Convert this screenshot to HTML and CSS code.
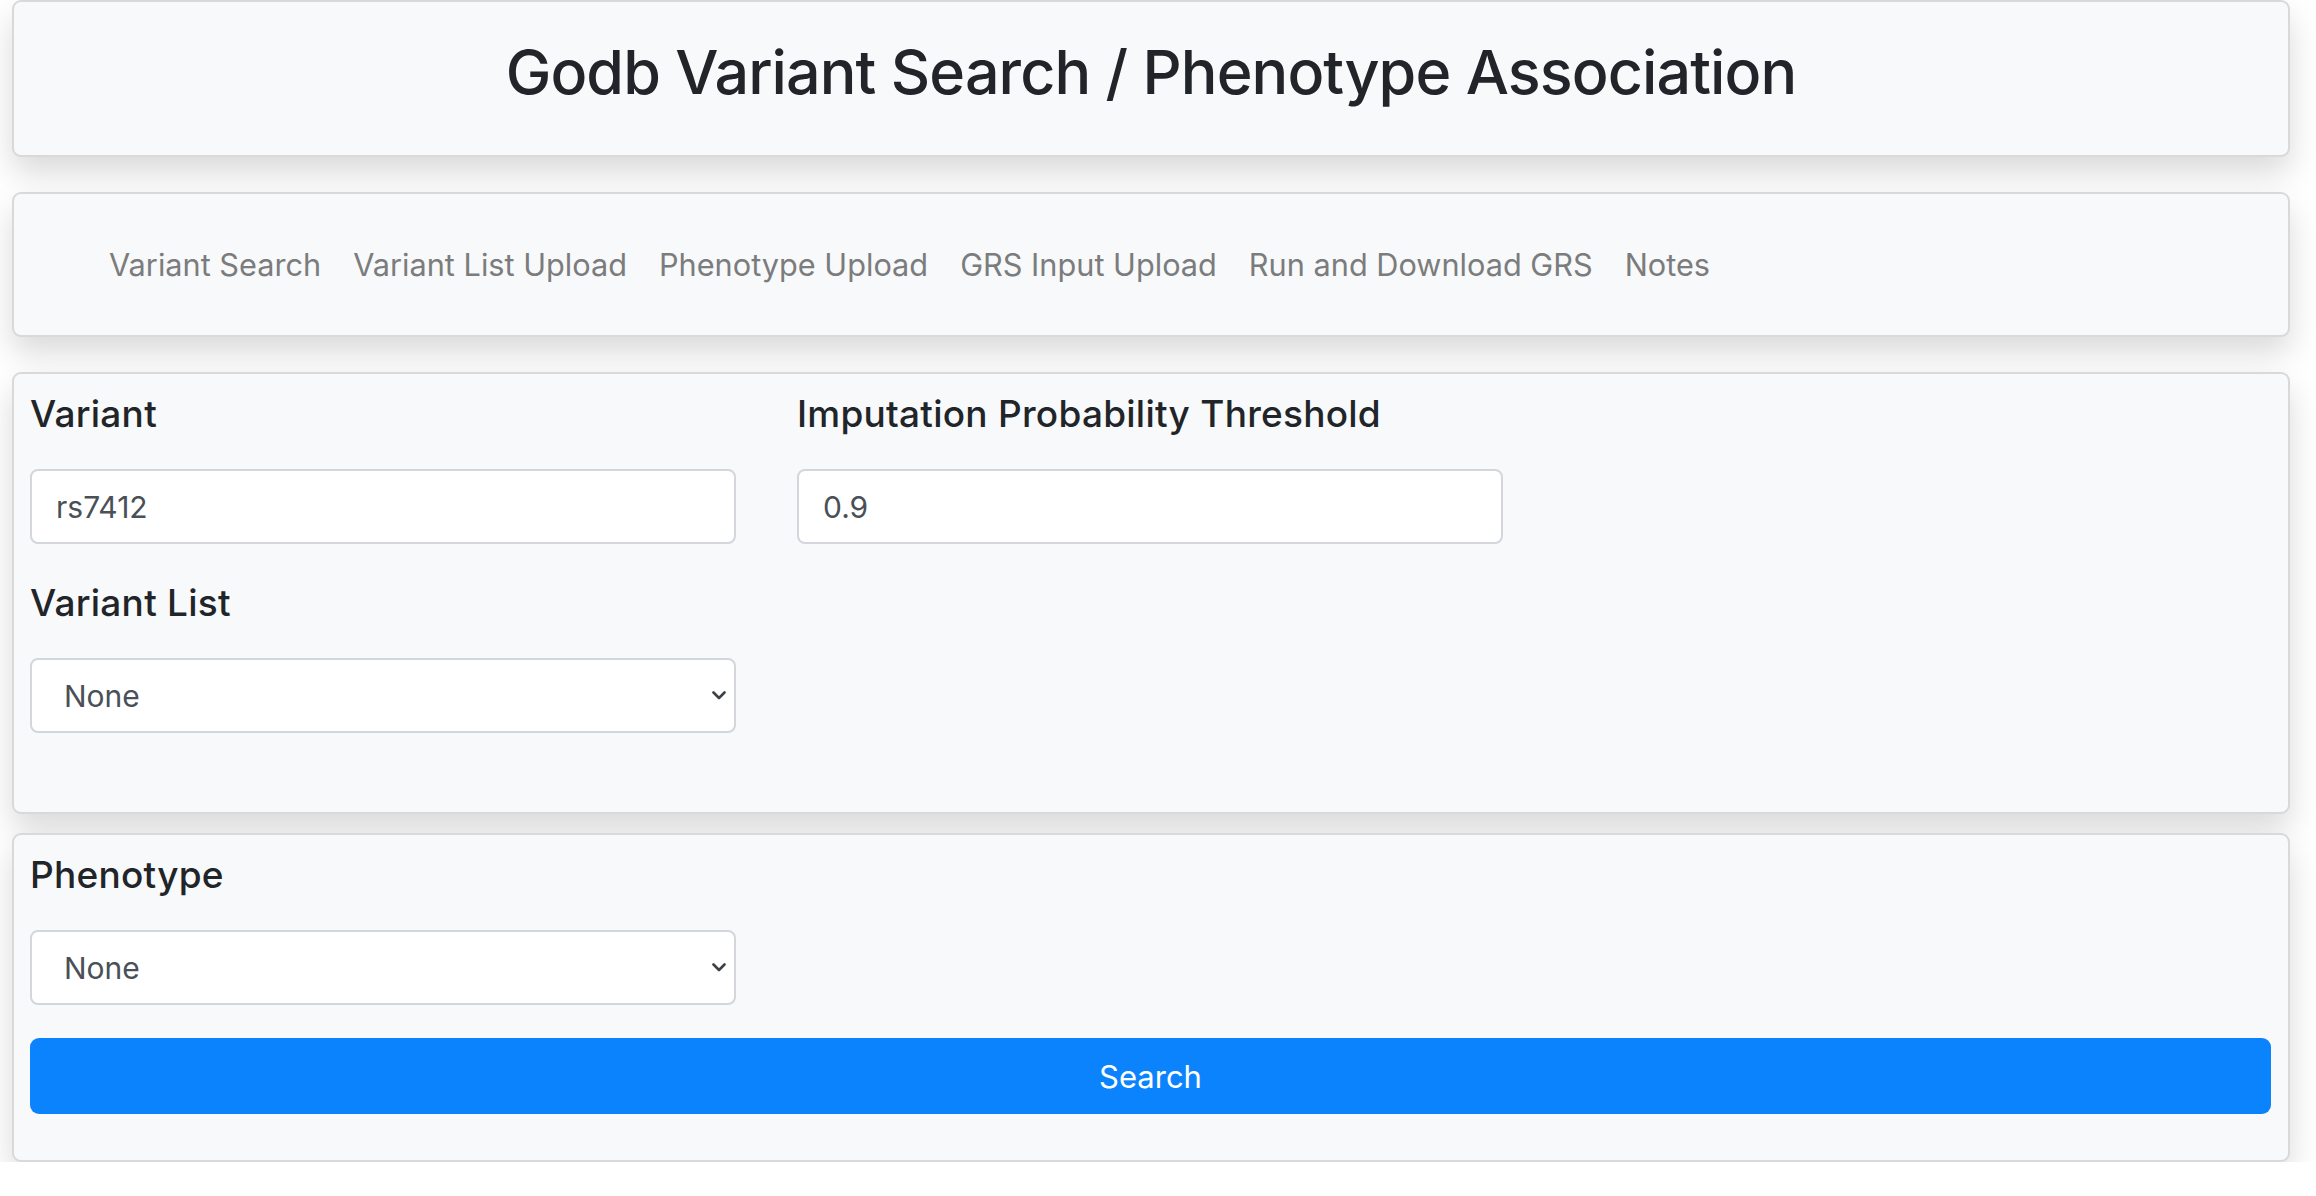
FILE: index.html
```html
<!DOCTYPE html>
<html lang="en">
<head>
<meta charset="utf-8">
<title>Godb Variant Search / Phenotype Association</title>
<link rel="stylesheet" href="styles.css">
</head>
<body>
<div class="page">
  <header class="card title-card">
    <h2 class="title">Godb Variant Search / Phenotype Association</h2>
  </header>

  <nav class="card nav-card">
    <a class="nav-link" href="#">Variant Search</a>
    <a class="nav-link" href="#">Variant List Upload</a>
    <a class="nav-link" href="#">Phenotype Upload</a>
    <a class="nav-link" href="#">GRS Input Upload</a>
    <a class="nav-link" href="#">Run and Download GRS</a>
    <a class="nav-link" href="#">Notes</a>
  </nav>

  <section class="card form-card variant-card">
    <div class="grid">
      <div class="field">
        <label class="label" for="variant">Variant</label>
        <input class="control" id="variant" type="text" value="rs7412">
      </div>
      <div class="field">
        <label class="label" for="thresh">Imputation Probability Threshold</label>
        <input class="control" id="thresh" type="text" value="0.9">
      </div>
      <div class="field">
        <label class="label" for="vlist">Variant List</label>
        <div class="select-wrap">
          <select class="control select" id="vlist"><option>None</option></select>
          <svg class="chev" width="14" height="9" viewBox="0 0 14 9"><path d="M1.5 1.5 L7 7 L12.5 1.5" fill="none" stroke="#3d4045" stroke-width="2.6" stroke-linecap="round" stroke-linejoin="round"/></svg>
        </div>
      </div>
    </div>
  </section>

  <section class="card form-card pheno-card">
    <div class="grid">
      <div class="field">
        <label class="label" for="pheno">Phenotype</label>
        <div class="select-wrap">
          <select class="control select" id="pheno"><option>None</option></select>
          <svg class="chev" width="14" height="9" viewBox="0 0 14 9"><path d="M1.5 1.5 L7 7 L12.5 1.5" fill="none" stroke="#3d4045" stroke-width="2.6" stroke-linecap="round" stroke-linejoin="round"/></svg>
        </div>
      </div>
    </div>
    <button class="btn" type="button">Search</button>
  </section>
</div>
</body>
</html>
```
FILE: styles.css
```css
html, body {
  margin: 0;
  padding: 0;
  background: #ffffff;
}
body {
  font-family: Inter, "Liberation Sans", Arial, sans-serif;
  color: #212529;
}
.page {
  margin: 0 26px 0 12px;
  display: flex;
  flex-direction: column;
}
.card {
  box-sizing: border-box;
  background: #f8f9fa;
  border: 2px solid rgba(0, 0, 0, 0.125);
  border-radius: 9px;
  box-shadow: 0 16px 32px rgba(0, 0, 0, 0.15);
}
.title-card {
  height: 157px;
  padding-top: 32px;
  margin-bottom: 35px;
  text-align: center;
}
.title {
  margin: 0;
  font-size: 61px;
  line-height: 76px;
  font-weight: 500;
  letter-spacing: -0.9px;
  color: #212529;
}
.nav-card {
  height: 145px;
  margin-bottom: 35px;
  display: flex;
  align-items: center;
  padding-left: 79px;
  gap: 0;
}
.nav-link {
  font-size: 30.7px;
  line-height: 44px;
  color: #7b7c7d;
  text-decoration: none;
  padding: 0 16px;
}
.form-card {
  padding: 18px 17px 0 16px;
}
.variant-card {
  height: 442px;
  margin-bottom: 19px;
}
.pheno-card {
  height: 329px;
}
.grid {
  display: grid;
  grid-template-columns: 706px 706px;
  column-gap: 61px;
  row-gap: 37px;
}
.field {
  display: flex;
  flex-direction: column;
}
.label {
  font-size: 37px;
  line-height: 44px;
  font-weight: 500;
  letter-spacing: 0.25px;
  color: #212529;
  margin-bottom: 33px;
}
.control {
  box-sizing: border-box;
  width: 706px;
  height: 75px;
  background: #ffffff;
  border: 2px solid #d3d6da;
  border-radius: 8px;
  padding: 0 24px;
  font-family: Inter, "Liberation Sans", Arial, sans-serif;
  font-size: 30px;
  color: #495057;
  outline: none;
}
.select-wrap {
  position: relative;
  width: 706px;
}
.select {
  -webkit-appearance: none;
  appearance: none;
  padding-left: 32px;
  display: block;
}
.chev {
  position: absolute;
  right: 10px;
  top: 33px;
}
.btn {
  display: block;
  box-sizing: border-box;
  width: 100%;
  height: 76px;
  margin-top: 33px;
  background: #0b83fd;
  color: #ffffff;
  border: none;
  border-radius: 9px;
  font-family: Inter, "Liberation Sans", Arial, sans-serif;
  font-size: 31px;
  font-weight: 400;
}
```
